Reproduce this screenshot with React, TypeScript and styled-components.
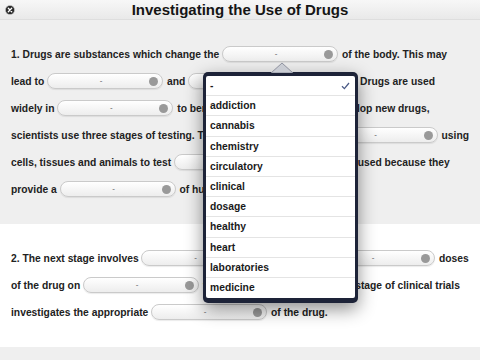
import React from 'react';
import styled, { createGlobalStyle } from 'styled-components';

const GlobalStyle = createGlobalStyle`
  html, body {
    margin: 0;
    padding: 0;
    background: #efefef;
    font-family: "Liberation Sans", Arial, Helvetica, sans-serif;
    overflow: hidden;
  }
`;

const Page = styled.div`
  position: relative;
  width: 480px;
  height: 360px;
  background: #efefef;
`;

const Header = styled.header`
  height: 20px;
  display: grid;
  grid-template-columns: 20px 1fr 20px;
  align-items: center;
  background: linear-gradient(#f7f7f7, #e9e9e9);
  border-bottom: 1px solid #dedede;
  box-sizing: border-box;
`;

const Title = styled.h1`
  margin: 0;
  font-size: 15px;
  font-weight: bold;
  color: #151515;
  line-height: 20px;
  text-align: center;
`;

const CloseButton = styled.span`
  display: flex;
  justify-content: center;
`;

const Section = styled.section<{ $white?: boolean }>`
  padding: 21px 11px;
  background: ${(p) => (p.$white ? '#ffffff' : '#efefef')};
`;

const Line = styled.div`
  height: 27px;
  line-height: 27px;
  white-space: nowrap;
  font-size: 10.3px;
  font-weight: bold;
  color: #222;
`;

const SelectBox = styled.span`
  display: inline-flex;
  align-items: center;
  vertical-align: middle;
  box-sizing: border-box;
  width: 116px;
  height: 16px;
  margin: -2px 1px 0 0;
  padding: 0 4px 0 5px;
  border: 1px solid #cacaca;
  border-radius: 8px;
  background: linear-gradient(#ffffff, #ededed);
  box-shadow: 0 1px 1px rgba(0, 0, 0, 0.08);
`;

const SelectLabel = styled.span`
  flex: 1;
  text-align: center;
  font-size: 8px;
  font-weight: normal;
  color: #555;
  line-height: 14px;
`;

const Knob = styled.span`
  width: 9px;
  height: 9px;
  border-radius: 50%;
  background: #999;
`;

const Popover = styled.div`
  position: absolute;
  left: 203px;
  top: 72px;
  width: 155px;
  padding: 4px 3px 5px 3px;
  box-sizing: border-box;
  background: #1d2338;
  border-radius: 5px;
  box-shadow: 0 6px 18px rgba(0, 0, 0, 0.45);
`;

const Arrow = styled.svg`
  position: absolute;
  left: 68px;
  top: -10px;
`;

const List = styled.ul`
  margin: 0;
  padding: 0;
  list-style: none;
  background: #fff;
  border-radius: 2px;
  overflow: hidden;
`;

const Item = styled.li`
  display: flex;
  align-items: center;
  justify-content: space-between;
  height: 20.2px;
  padding: 0 5px 0 4px;
  box-sizing: border-box;
  font-size: 10.3px;
  font-weight: bold;
  color: #1a1a1a;
  border-bottom: 1px solid #e4e4e4;

  &:last-child {
    border-bottom: none;
  }
`;

const Select = () => (
  <SelectBox>
    <SelectLabel>-</SelectLabel>
    <Knob />
  </SelectBox>
);

const options = [
  '-',
  'addiction',
  'cannabis',
  'chemistry',
  'circulatory',
  'clinical',
  'dosage',
  'healthy',
  'heart',
  'laboratories',
  'medicine',
];

export default function App() {
  return (
    <Page>
      <GlobalStyle />
      <Header>
        <CloseButton>
          <svg width="10" height="10" viewBox="0 0 10 10">
            <circle cx="5" cy="5" r="4.6" fill="#2a2a2a" stroke="#cfcfcf" strokeWidth="0.6" />
            <path d="M3.3 3.3 L6.7 6.7 M6.7 3.3 L3.3 6.7" stroke="#fff" strokeWidth="1.3" strokeLinecap="round" />
          </svg>
        </CloseButton>
        <Title>Investigating the Use of Drugs</Title>
        <span />
      </Header>

      <Section>
        <Line>
          1. Drugs are substances which change the <Select /> of the body. This may
        </Line>
        <Line>
          lead to <Select /> and <Select /> problems. Drugs are used
        </Line>
        <Line>
          widely in <Select /> to benefit human health. So,{'\u00a0'} to develop new drugs,
        </Line>
        <Line>
          scientists use three stages of testing. The first stage is done in <Select /> using
        </Line>
        <Line>
          cells, tissues and animals to test <Select />. Animals are used because they
        </Line>
        <Line>
          provide a <Select /> of human biology.
        </Line>
      </Section>

      <Section $white>
        <Line>
          2. The next stage involves <Select /> volunteers, <Select /> doses
        </Line>
        <Line>
          of the drug on <Select /> volunteers. The second, larger stage of clinical trials
        </Line>
        <Line>
          investigates the appropriate <Select /> of the drug.
        </Line>
      </Section>

      <Popover>
        <Arrow width="22" height="11" viewBox="0 0 22 11">
          <path d="M0 11 L11 1 L22 11 Z" fill="#c9ccd3" stroke="#7d8290" strokeWidth="0.8" />
        </Arrow>
        <List>
          {options.map((o, i) => (
            <Item key={o}>
              <span>{o}</span>
              {i === 0 && (
                <svg width="9" height="8" viewBox="0 0 9 8">
                  <path d="M1 4.2 L3.4 6.6 L8 1" fill="none" stroke="#4a5a86" strokeWidth="1.3" />
                </svg>
              )}
            </Item>
          ))}
        </List>
      </Popover>
    </Page>
  );
}
